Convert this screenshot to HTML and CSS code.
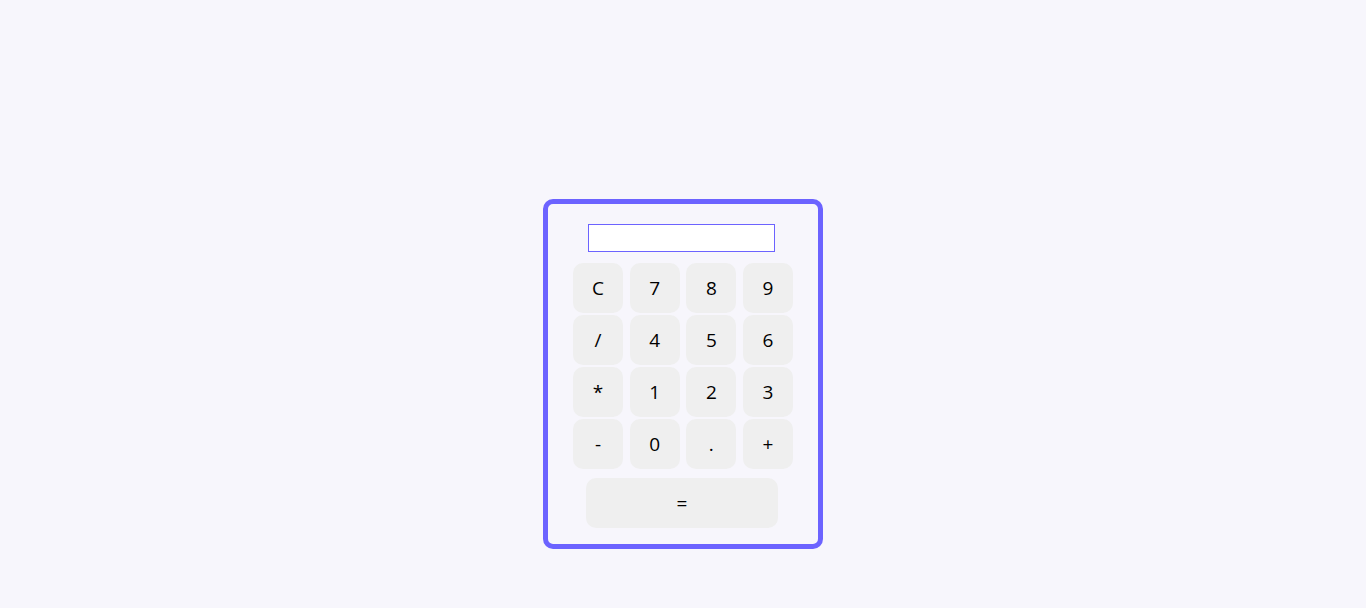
FILE: index.html
```html
<!DOCTYPE html>
<html>
<head>
<meta charset="utf-8">
<link rel="stylesheet" href="styles.css">
</head>
<body>
<main class="page">
  <div class="calc">
    <input class="display" type="text">
    <div class="keys">
      <button class="key">C</button>
      <button class="key">7</button>
      <button class="key">8</button>
      <button class="key">9</button>
      <button class="key">/</button>
      <button class="key">4</button>
      <button class="key">5</button>
      <button class="key">6</button>
      <button class="key">*</button>
      <button class="key">1</button>
      <button class="key">2</button>
      <button class="key">3</button>
      <button class="key">-</button>
      <button class="key">0</button>
      <button class="key">.</button>
      <button class="key">+</button>
    </div>
    <button class="key equals">=</button>
  </div>
</main>
</body>
</html>
```

FILE: styles.css
```css
html, body {
  margin: 0;
  padding: 0;
  background: #f7f6fc;
  font-family: "Open Sans", "Noto Sans", sans-serif;
}
.page {
  height: 608px;
  display: flex;
  justify-content: center;
  padding-top: 199px;
  box-sizing: border-box;
}
.calc {
  width: 280px;
  height: 350px;
  box-sizing: border-box;
  border: 5px solid #6c63ff;
  border-radius: 10px;
  padding: 20px 0 0 0;
  display: flex;
  flex-direction: column;
  align-items: center;
}
.display {
  width: 187px;
  height: 28px;
  box-sizing: border-box;
  border: 1px solid #6c63ff;
  background: #fff;
  margin: 0 4px 11px 0;
  padding: 0;
  outline: none;
}
.keys {
  display: grid;
  grid-template-columns: repeat(4, 50px);
  grid-auto-rows: 50px;
  column-gap: 6.67px;
  row-gap: 2px;
}
.key {
  border: none;
  background: #efefef;
  border-radius: 10px;
  font-family: "Open Sans", "Noto Sans", sans-serif;
  font-size: 19px;
  color: #000;
  padding: 0;
  margin: 0;
}
.equals {
  width: 192px;
  height: 50px;
  margin: 9px 2px 0 0;
}
```
